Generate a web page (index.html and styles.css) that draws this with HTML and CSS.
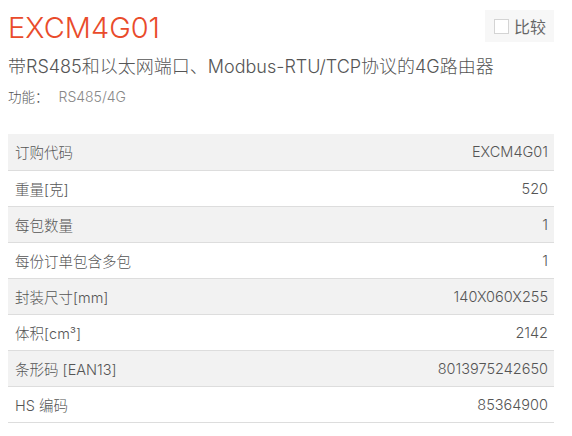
FILE: index.html
```html
<!DOCTYPE html>
<html lang="zh-CN">

<head>
    <meta charset="UTF-8" />
    <title>EXCM4G01</title>
    <link rel="stylesheet" href="styles.css">
</head>

<body>
    <main class="product">
        <div class="product-head">
            <h1 class="product-code">EXCM4G01</h1>
            <label class="compare">
                <span class="compare-box"></span>
                <span>比较</span>
            </label>
        </div>
        <h2 class="product-title">带RS485和以太网端口、Modbus-RTU/TCP协议的4G路由器</h2>
        <p class="product-feature">功能：<span class="feature-value">RS485/4G</span></p>

        <table class="specs">
            <tbody>
                <tr><td>订购代码</td><td>EXCM4G01</td></tr>
                <tr><td>重量[克]</td><td>520</td></tr>
                <tr><td>每包数量</td><td>1</td></tr>
                <tr><td>每份订单包含多包</td><td>1</td></tr>
                <tr><td>封装尺寸[mm]</td><td>140X060X255</td></tr>
                <tr><td>体积[cm³]</td><td>2142</td></tr>
                <tr><td>条形码 [EAN13]</td><td>8013975242650</td></tr>
                <tr><td>HS 编码</td><td>85364900</td></tr>
            </tbody>
        </table>
    </main>
</body>

</html>
```

FILE: styles.css
```css
* {
    box-sizing: border-box;
}

body {
    margin: 0;
    background: #fff;
    color: #555;
    font-family: Inter, "Noto Sans CJK SC", sans-serif;
}

.product {
    padding: 8px 18px 0 8px;
}

.product-head {
    display: flex;
    justify-content: space-between;
    align-items: flex-start;
}

.product-code {
    margin: 0;
    font-size: 29px;
    font-weight: 300;
    line-height: 40px;
    color: #e94b2b;
}

.compare {
    display: flex;
    align-items: center;
    gap: 5px;
    margin-top: 2px;
    padding: 0 8px 0 9px;
    height: 32px;
    background: #f7f7f7;
    font-size: 16px;
    color: #666;
}

.compare-box {
    width: 15px;
    height: 15px;
    border: 1px solid #d4d4d4;
    background: #fff;
}

.product-title {
    margin: 6px 0 0;
    font-size: 18px;
    font-weight: 300;
    line-height: 26px;
    color: #555;
}

.product-feature {
    margin: 7px 0 0;
    font-size: 13.5px;
    font-weight: 300;
    line-height: 20px;
    color: #555;
}

.feature-value {
    margin-left: 10px;
    font-size: 14px;
    color: #888;
}

.specs {
    width: 100%;
    margin-top: 27px;
    border-collapse: collapse;
    font-size: 14.5px;
    font-weight: 300;
}

.specs td {
    height: 36px;
    padding: 0 6px 0 7px;
    border-bottom: 1px solid #ddd;
}

.specs td:last-child {
    text-align: right;
}

.specs tr:nth-child(odd) {
    background: #f2f2f2;
}
```
